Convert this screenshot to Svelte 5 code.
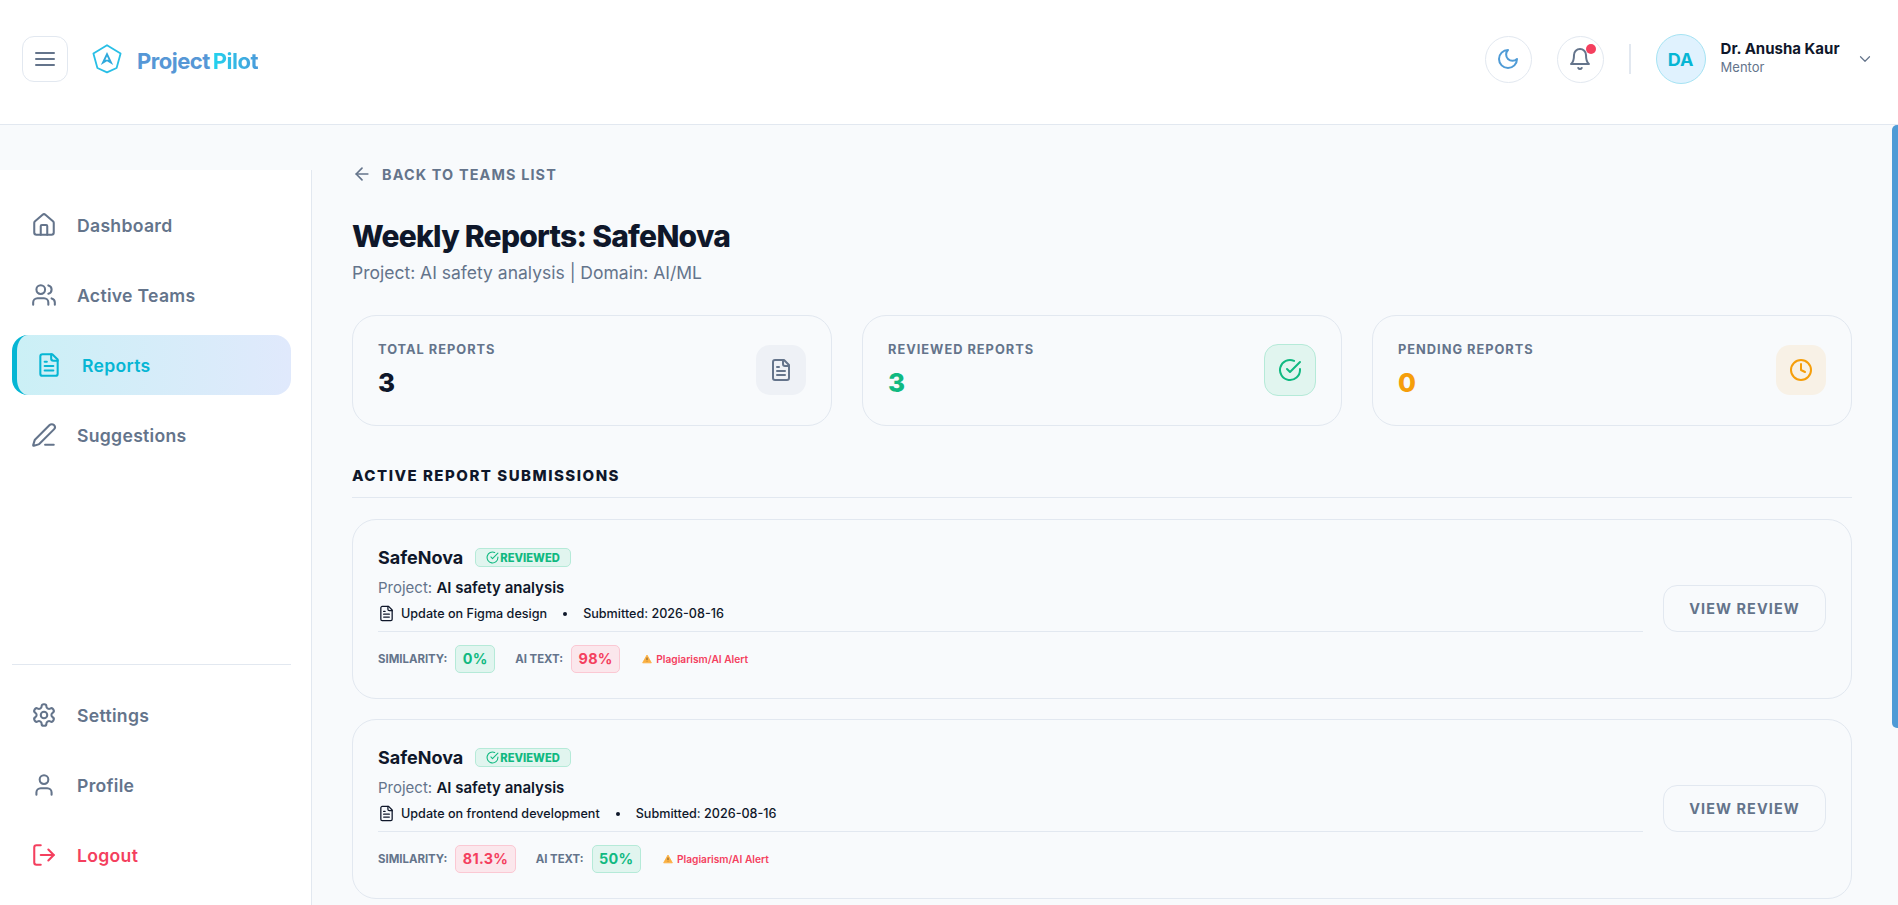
<script lang="ts">
  const mainNav = [
    { label: 'Dashboard', icon: 'home' },
    { label: 'Active Teams', icon: 'users' },
    { label: 'Reports', icon: 'file', active: true },
    { label: 'Suggestions', icon: 'pen' },
  ];
  const footerNav = [
    { label: 'Settings', icon: 'gear' },
    { label: 'Profile', icon: 'user' },
    { label: 'Logout', icon: 'logout', danger: true },
  ];
  const stats = [
    { label: 'TOTAL REPORTS', value: 3, tone: 'slate', icon: 'file' },
    { label: 'REVIEWED REPORTS', value: 3, tone: 'green', icon: 'check' },
    { label: 'PENDING REPORTS', value: 0, tone: 'amber', icon: 'clock' },
  ];
  const reports = [
    { title: 'Update on Figma design', similarity: '0%', simBad: false, ai: '98%', aiBad: true },
    { title: 'Update on frontend development', similarity: '81.3%', simBad: true, ai: '50%', aiBad: false },
  ];
</script>

{#snippet icon(name: string)}
  <svg class="icon" viewBox="0 0 24 24" fill="none" stroke="currentColor" stroke-linecap="round" stroke-linejoin="round">
    {#if name === 'home'}
      <path d="M15 21v-8a1 1 0 0 0-1-1h-4a1 1 0 0 0-1 1v8" />
      <path d="M3 10a2 2 0 0 1 .709-1.528l7-5.999a2 2 0 0 1 2.582 0l7 5.999A2 2 0 0 1 21 10v9a2 2 0 0 1-2 2H5a2 2 0 0 1-2-2z" />
    {:else if name === 'users'}
      <path d="M16 21v-2a4 4 0 0 0-4-4H6a4 4 0 0 0-4 4v2" />
      <circle cx="9" cy="7" r="4" />
      <path d="M22 21v-2a4 4 0 0 0-3-3.87" />
      <path d="M16 3.13a4 4 0 0 1 0 7.75" />
    {:else if name === 'file'}
      <path d="M15 2H6a2 2 0 0 0-2 2v16a2 2 0 0 0 2 2h12a2 2 0 0 0 2-2V7Z" />
      <path d="M14 2v4a2 2 0 0 0 2 2h4" />
      <path d="M10 9H8" />
      <path d="M16 13H8" />
      <path d="M16 17H8" />
    {:else if name === 'pen'}
      <path d="M13 21h8" />
      <path d="M21.174 6.812a1 1 0 0 0-3.986-3.987L3.842 16.174a2 2 0 0 0-.5.83l-1.321 4.352a.5.5 0 0 0 .623.622l4.353-1.32a2 2 0 0 0 .83-.497z" />
    {:else if name === 'gear'}
      <path d="M12.22 2h-.44a2 2 0 0 0-2 2v.18a2 2 0 0 1-1 1.73l-.43.25a2 2 0 0 1-2 0l-.15-.08a2 2 0 0 0-2.73.73l-.22.38a2 2 0 0 0 .73 2.73l.15.1a2 2 0 0 1 1 1.72v.51a2 2 0 0 1-1 1.74l-.15.09a2 2 0 0 0-.73 2.73l.22.38a2 2 0 0 0 2.73.73l.15-.08a2 2 0 0 1 2 0l.43.25a2 2 0 0 1 1 1.73V20a2 2 0 0 0 2 2h.44a2 2 0 0 0 2-2v-.18a2 2 0 0 1 1-1.73l.43-.25a2 2 0 0 1 2 0l.15.08a2 2 0 0 0 2.73-.73l.22-.39a2 2 0 0 0-.73-2.73l-.15-.08a2 2 0 0 1-1-1.74v-.5a2 2 0 0 1 1-1.74l.15-.09a2 2 0 0 0 .73-2.73l-.22-.38a2 2 0 0 0-2.73-.73l-.15.08a2 2 0 0 1-2 0l-.43-.25a2 2 0 0 1-1-1.73V4a2 2 0 0 0-2-2z" />
      <circle cx="12" cy="12" r="3" />
    {:else if name === 'user'}
      <path d="M19 21v-2a4 4 0 0 0-4-4H9a4 4 0 0 0-4 4v2" />
      <circle cx="12" cy="7" r="4" />
    {:else if name === 'logout'}
      <path d="M9 21H5a2 2 0 0 1-2-2V5a2 2 0 0 1 2-2h4" />
      <path d="m16 17 5-5-5-5" />
      <path d="M21 12H9" />
    {:else if name === 'check'}
      <path d="M22 11.08V12a10 10 0 1 1-5.93-9.14" />
      <path d="M22 4 12 14.01l-3-3" />
    {:else if name === 'clock'}
      <circle cx="12" cy="12" r="10" />
      <path d="M12 6v6l4 2" />
    {:else if name === 'moon'}
      <path d="M12 3a6 6 0 0 0 9 9 9 9 0 1 1-9-9Z" />
    {:else if name === 'bell'}
      <path d="M6 8a6 6 0 0 1 12 0c0 7 3 9 3 9H3s3-2 3-9" />
      <path d="M10.3 21a1.94 1.94 0 0 0 3.4 0" />
    {:else if name === 'menu'}
      <path d="M3 6h18" />
      <path d="M3 12h18" />
      <path d="M3 18h18" />
    {:else if name === 'back'}
      <path d="m12 19-7-7 7-7" />
      <path d="M19 12H5" />
    {:else if name === 'chevron'}
      <path d="m6 9 6 6 6-6" />
    {/if}
  </svg>
{/snippet}

<div class="app">
  <header class="topbar">
    <div class="topbar__left">
      <button class="menu-btn">{@render icon('menu')}</button>
      <div class="brand">
        <svg class="brand__mark" viewBox="0 0 30 30" fill="none">
          <path d="M15 1.2 28.6 9.6 24.6 24 15 28.4 5.4 24 1.4 9.6Z" stroke="#28bfe6" stroke-width="1.8" stroke-linejoin="round" />
          <path d="M15 8 21.2 21 15 17.2 8.8 21Z" fill="#2fa9dc" />
          <path d="M15 12.6 16.6 15.8H13.4Z" fill="#fff" />
        </svg>
        <span class="brand__name"><span class="brand__first">Project</span><span class="brand__second">Pilot</span></span>
      </div>
    </div>
    <div class="topbar__right">
      <button class="round-btn round-btn--moon">{@render icon('moon')}</button>
      <button class="round-btn round-btn--bell">
        {@render icon('bell')}
        <span class="round-btn__dot"></span>
      </button>
      <span class="topbar__sep"></span>
      <div class="account">
        <div class="account__avatar">DA</div>
        <div class="account__text">
          <span class="account__name">Dr. Anusha Kaur</span>
          <span class="account__role">Mentor</span>
        </div>
        <span class="account__chevron">{@render icon('chevron')}</span>
      </div>
    </div>
  </header>

  <div class="shell">
    <aside class="sidebar">
      <nav class="sidebar__group">
        {#each mainNav as item}
          <div class="nav-item" class:nav-item--active={item.active}>
            {@render icon(item.icon)}
            <span>{item.label}</span>
          </div>
        {/each}
      </nav>
      <nav class="sidebar__group sidebar__group--bottom">
        {#each footerNav as item}
          <div class="nav-item" class:nav-item--danger={item.danger}>
            {@render icon(item.icon)}
            <span>{item.label}</span>
          </div>
        {/each}
      </nav>
    </aside>

    <main class="content">
      <div class="back-link">{@render icon('back')}<span>BACK TO TEAMS LIST</span></div>
      <h1 class="page-title">Weekly Reports: SafeNova</h1>
      <p class="page-sub">Project: AI safety analysis | Domain: AI/ML</p>

      <section class="stats">
        {#each stats as stat}
          <div class="stat">
            <div class="stat__text">
              <div class="stat__label">{stat.label}</div>
              <div class="stat__value stat__value--{stat.tone}">{stat.value}</div>
            </div>
            <div class="stat__icon stat__icon--{stat.tone}">{@render icon(stat.icon)}</div>
          </div>
        {/each}
      </section>

      <h2 class="section-title">ACTIVE REPORT SUBMISSIONS</h2>

      <section class="reports">
        {#each reports as report}
          <article class="report">
            <div class="report__body">
              <div class="report__head">
                <span class="report__team">SafeNova</span>
                <span class="badge">{@render icon('check')}REVIEWED</span>
              </div>
              <div class="report__project">Project: <strong>AI safety analysis</strong></div>
              <div class="report__meta">
                {@render icon('file')}
                <span>{report.title}</span>
                <span class="report__dot"></span>
                <span>Submitted: 2026-08-16</span>
              </div>
              <div class="report__metrics">
                <span class="metric-label">SIMILARITY:</span>
                <span class="pill" class:pill--bad={report.simBad}>{report.similarity}</span>
                <span class="metric-label metric-label--second">AI TEXT:</span>
                <span class="pill" class:pill--bad={report.aiBad}>{report.ai}</span>
                <span class="alert">
                  <svg class="alert__icon" viewBox="0 0 12 12"><path d="M6 1.2 11.2 10.6H.8Z" fill="#fbb040" stroke="#fbb040" stroke-linejoin="round" /><path d="M6 4.4v3M6 8.8v.4" stroke="#5b4632" stroke-width="1" /></svg>
                  Plagiarism/AI Alert
                </span>
              </div>
            </div>
            <button class="view-btn">VIEW REVIEW</button>
          </article>
        {/each}
      </section>
    </main>

    <!-- headless chrome hides native scrollbars, so the thumb is drawn over the page -->
    <span class="scroll-thumb"></span>
  </div>
</div>

<style>
  :global(body) {
    background: #f8fafc;
    font-family: Inter, 'Liberation Sans', sans-serif;
    overflow: hidden;
  }

  button {
    font-family: inherit;
    cursor: pointer;
  }

  .icon {
    display: block;
    flex: none;
    height: 24px;
    stroke-width: 2;
    width: 24px;
  }

  .app {
    display: flex;
    flex-direction: column;
    height: 905px;
  }

  .topbar {
    align-items: center;
    background: #fff;
    border-bottom: 1px solid #e2e8f0;
    box-sizing: content-box;
    display: flex;
    flex: none;
    height: 118px;
    justify-content: space-between;
    padding: 0 24.5px 6px 22px;
  }

  .topbar__left,
  .topbar__right,
  .brand {
    align-items: center;
    display: flex;
  }

  .topbar__left {
    gap: 24px;
  }

  .menu-btn {
    align-items: center;
    background: #fff;
    border: 1px solid #e2e8f0;
    border-radius: 12px;
    color: #64748b;
    display: flex;
    height: 46px;
    justify-content: center;
    padding: 0;
    width: 46px;
  }

  .brand {
    gap: 15px;
  }

  .brand__mark {
    display: block;
    height: 30px;
    width: 30px;
  }

  .brand__name {
    display: flex;
    font-size: 22px;
    font-weight: 700;
    gap: 3px;
    letter-spacing: -0.5px;
    padding-top: 3px;
  }

  .brand__first {
    color: #5697d6;
  }

  .brand__second {
    background: linear-gradient(90deg, #22d3ee, #4a9bdb);
    background-clip: text;
    -webkit-background-clip: text;
    color: transparent;
  }

  .round-btn {
    align-items: center;
    background: #fff;
    border: 1px solid #e2e8f0;
    border-radius: 50%;
    display: flex;
    height: 47px;
    justify-content: center;
    margin-right: 25px;
    padding: 0;
    position: relative;
    width: 47px;
  }

  .round-btn--moon {
    color: #4f9bd6;
  }

  .round-btn--bell {
    color: #64748b;
  }

  .round-btn__dot {
    background: #f43f5e;
    border-radius: 50%;
    height: 10px;
    position: absolute;
    right: 7px;
    top: 7px;
    width: 10px;
  }

  .topbar__sep {
    background: #e2e8f0;
    height: 30px;
    margin-right: 25px;
    width: 2px;
  }

  .account {
    align-items: center;
    display: flex;
  }

  .account__avatar {
    align-items: center;
    background: #e0f2fe;
    border: 1px solid #a5e3f3;
    border-radius: 50%;
    box-sizing: border-box;
    color: #06b6d4;
    display: flex;
    font-size: 18px;
    font-weight: 700;
    height: 50px;
    justify-content: center;
    margin-right: 15px;
    width: 50px;
  }

  .account__text {
    display: flex;
    flex-direction: column;
    margin: 0 16px 3px 0;
  }

  .account__name {
    color: #0f172a;
    font-size: 15px;
    font-weight: 700;
    line-height: 20px;
  }

  .account__role {
    color: #64748b;
    font-size: 13px;
    line-height: 17px;
  }

  .account__chevron {
    color: #64748b;
  }

  .account__chevron .icon {
    height: 18px;
    stroke-width: 1.6;
    width: 18px;
  }

  .shell {
    display: flex;
    flex: 1;
    min-height: 0;
    position: relative;
  }

  .scroll-thumb {
    background: #4f9bd6;
    border-radius: 5px 0 0 5px;
    height: 603px;
    position: absolute;
    right: 0;
    top: 0;
    width: 6px;
  }

  .sidebar {
    background: #fff;
    border-right: 1px solid #e2e8f0;
    box-sizing: border-box;
    display: flex;
    flex: none;
    flex-direction: column;
    justify-content: space-between;
    margin-top: 45px;
    padding: 25px 20px 20px 12px;
    width: 312px;
  }

  .sidebar__group {
    display: flex;
    flex-direction: column;
    gap: 10px;
  }

  .sidebar__group--bottom {
    border-top: 1px solid #e2e8f0;
    padding-top: 20px;
  }

  .nav-item {
    align-items: center;
    border-radius: 16px;
    box-sizing: border-box;
    color: #64748b;
    display: flex;
    font-size: 17.6px;
    font-weight: 600;
    gap: 20px;
    height: 60px;
    letter-spacing: 0.3px;
    padding-left: 19px;
  }

  .nav-item .icon {
    height: 26px;
    stroke-width: 1.9;
    width: 26px;
  }

  .nav-item--active {
    background: linear-gradient(90deg, #cbf0f6, #e0e9fc);
    border-left: 5px solid #06b6d4;
    color: #06b6d4;
  }

  .nav-item--danger {
    color: #f43f5e;
  }

  .content {
    box-sizing: border-box;
    flex: 1;
    min-width: 0;
    overflow: hidden;
    padding: 39px 46px 0 40px;
  }

  .back-link {
    align-items: center;
    color: #64748b;
    display: flex;
    font-size: 14.4px;
    font-weight: 700;
    gap: 10px;
    height: 20px;
    letter-spacing: 1.15px;
  }

  .back-link .icon {
    height: 20px;
    width: 20px;
  }

  .page-title {
    color: #0f172a;
    font-size: 30px;
    font-weight: 800;
    letter-spacing: -0.75px;
    line-height: 40px;
    margin: 32px 0 0;
  }

  .page-sub {
    color: #64748b;
    font-size: 17.5px;
    line-height: 24px;
    margin: 5px 0 0;
  }

  .stats {
    display: grid;
    gap: 30px;
    grid-template-columns: repeat(3, 1fr);
    margin-top: 29.5px;
  }

  .stat {
    align-items: center;
    border: 1px solid #e2e8f0;
    border-radius: 24px;
    box-sizing: border-box;
    display: flex;
    height: 111px;
    justify-content: space-between;
    padding: 0 25px;
  }

  .stat__text {
    padding-top: 1px;
  }

  .stat__label {
    color: #64748b;
    font-size: 12.8px;
    font-weight: 700;
    letter-spacing: 1px;
    line-height: 16px;
  }

  .stat__value {
    font-size: 26px;
    font-weight: 800;
    line-height: 34px;
    margin-top: 8px;
  }

  .stat__value--slate {
    color: #0f172a;
  }

  .stat__value--green {
    color: #10b981;
  }

  .stat__value--amber {
    color: #f59e0b;
  }

  .stat__icon {
    align-items: center;
    border-radius: 14px;
    box-sizing: border-box;
    display: flex;
    height: 50px;
    justify-content: center;
    width: 50px;
  }

  .stat__icon--slate {
    background: #eef1f6;
    color: #64748b;
  }

  .stat__icon--green {
    background: #e1f5ef;
    border: 1px solid #b5ead8;
    color: #10b981;
    height: 52px;
    width: 52px;
  }

  .stat__icon--amber {
    background: #f8f1e6;
    color: #f59e0b;
  }

  .section-title {
    border-bottom: 1px solid #e2e8f0;
    color: #0f172a;
    font-size: 15px;
    font-weight: 800;
    letter-spacing: 1.5px;
    line-height: 20px;
    margin: 40px 0 21px;
    padding-bottom: 11px;
  }

  .reports {
    display: flex;
    flex-direction: column;
    gap: 20px;
  }

  .report {
    align-items: center;
    border: 1px solid #e2e8f0;
    border-radius: 24px;
    box-sizing: border-box;
    display: flex;
    gap: 20px;
    padding: 25px;
  }

  .report__body {
    flex: 1;
    min-width: 0;
  }

  .report__head {
    align-items: center;
    display: flex;
    gap: 12px;
  }

  .report__team {
    color: #0f172a;
    font-size: 18px;
    font-weight: 700;
    line-height: 26px;
  }

  .badge {
    align-items: center;
    background: #e1f5ef;
    border: 1px solid #b5ead8;
    border-radius: 5px;
    box-sizing: border-box;
    color: #10b981;
    display: flex;
    font-size: 11.2px;
    font-weight: 800;
    gap: 1px;
    height: 19px;
    padding: 0 10px;
  }

  .badge .icon {
    height: 13px;
    stroke-width: 2;
    width: 13px;
  }

  .report__project {
    color: #64748b;
    font-size: 15px;
    line-height: 22px;
    margin-top: 6px;
  }

  .report__project strong {
    color: #0f172a;
    font-weight: 600;
  }

  .report__meta {
    align-items: center;
    border-bottom: 1px solid #e2e8f0;
    color: #0f172a;
    display: flex;
    font-size: 12.6px;
    font-weight: 500;
    gap: 6px;
    margin-top: 6.5px;
    padding-bottom: 9px;
  }

  .report__meta .icon {
    height: 17px;
    stroke-width: 1.8;
    width: 17px;
  }

  .report__dot {
    background: #0f172a;
    border-radius: 50%;
    height: 4px;
    margin: 0 10px;
    width: 4px;
  }

  .report__metrics {
    align-items: center;
    display: flex;
    margin-top: 12.5px;
  }

  .metric-label {
    color: #64748b;
    font-size: 11.4px;
    font-weight: 700;
    margin-right: 8px;
  }

  .metric-label--second {
    margin-left: 20px;
  }

  .pill {
    background: #e1f5ef;
    border: 1px solid #b5ead8;
    border-radius: 5px;
    box-sizing: border-box;
    color: #10b981;
    font-size: 14.4px;
    font-weight: 700;
    letter-spacing: 0.3px;
    line-height: 26px;
    padding: 0 6.5px;
  }

  .pill--bad {
    background: #fbe7ec;
    border-color: #fbc8d3;
    color: #f43f5e;
  }

  .alert {
    align-items: center;
    color: #f43f5e;
    display: flex;
    font-size: 10.2px;
    font-weight: 600;
    gap: 4px;
    margin-left: 22px;
  }

  .alert__icon {
    height: 10px;
    width: 10px;
  }

  .view-btn {
    background: transparent;
    border: 1px solid #e2e8f0;
    border-radius: 14px;
    color: #64748b;
    flex: none;
    font-size: 14.4px;
    font-weight: 700;
    height: 47px;
    letter-spacing: 1.1px;
    padding: 0;
    width: 163px;
  }
</style>
